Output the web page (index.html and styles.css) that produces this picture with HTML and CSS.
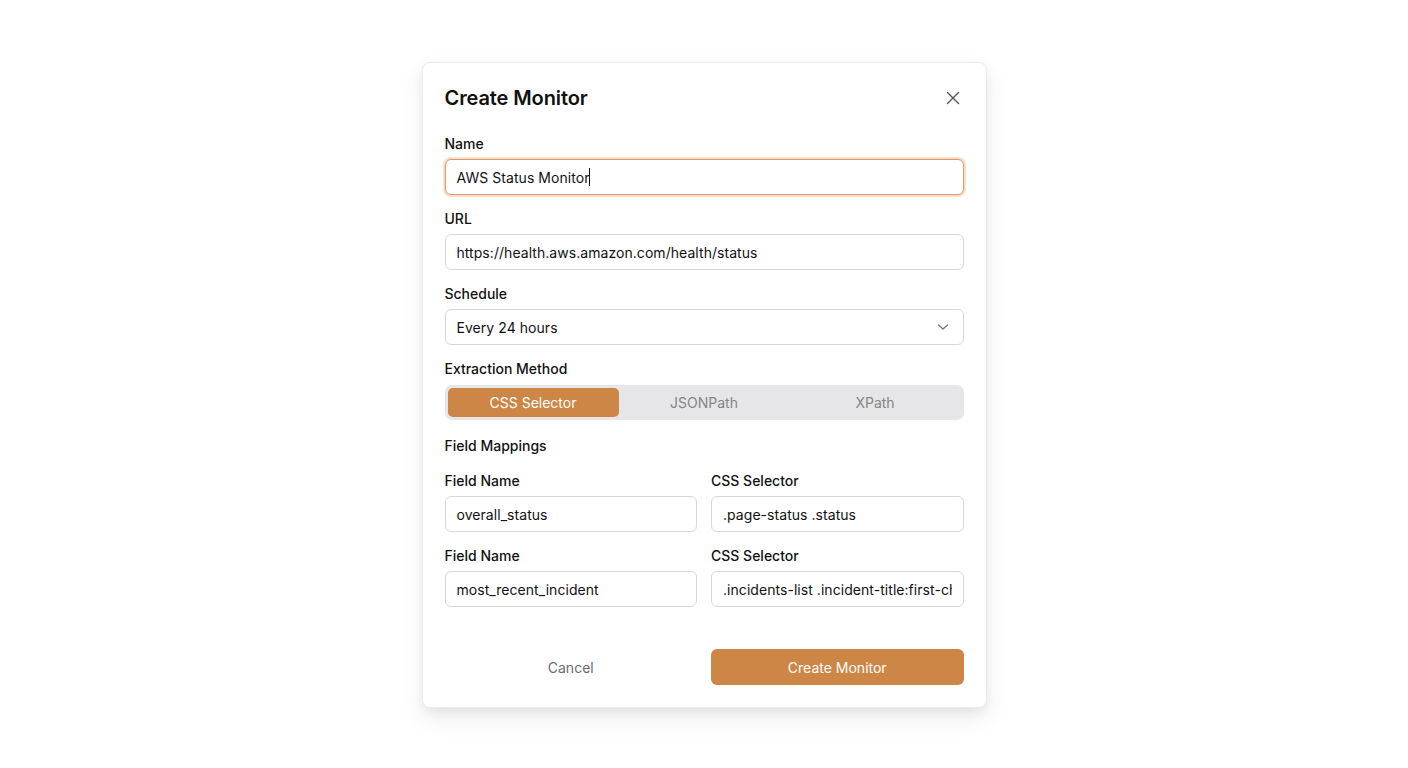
FILE: index.html
```html
<!DOCTYPE html>
<html lang="en">
<head>
<meta charset="utf-8">
<title>Create Monitor</title>
<link rel="stylesheet" href="styles.css">
</head>
<body>
<div class="page">
  <div class="modal">
    <div class="modal-header">
      <h2 class="title">Create Monitor</h2>
      <button class="close" aria-label="Close">
        <svg width="14" height="14" viewBox="0 0 14 14" fill="none" stroke="#555" stroke-width="1.4" stroke-linecap="round"><path d="M1.5 1.5l11 11M12.5 1.5l-11 11"/></svg>
      </button>
    </div>
    <div class="field">
      <label class="label">Name</label>
      <div class="input focused">AWS Status Monitor<span class="caret"></span></div>
    </div>
    <div class="field">
      <label class="label">URL</label>
      <div class="input">https://health.aws.amazon.com/health/status</div>
    </div>
    <div class="field">
      <label class="label">Schedule</label>
      <div class="input select">
        <span>Every 24 hours</span>
        <svg width="12" height="8" viewBox="0 0 12 8" fill="none" stroke="#777" stroke-width="1.3" stroke-linecap="round" stroke-linejoin="round"><path d="M1.5 2l4.5 4 4.5-4"/></svg>
      </div>
    </div>
    <div class="field seg-field">
      <label class="label">Extraction Method</label>
      <div class="segmented">
        <div class="seg active">CSS Selector</div>
        <div class="seg">JSONPath</div>
        <div class="seg">XPath</div>
      </div>
    </div>
    <div class="section-label">Field Mappings</div>
    <div class="mapping">
      <div class="field-c">
        <label class="label">Field Name</label>
        <div class="input">overall_status</div>
      </div>
      <div class="field-c">
        <label class="label">CSS Selector</label>
        <div class="input">.page-status .status</div>
      </div>
    </div>
    <div class="mapping">
      <div class="field-c">
        <label class="label">Field Name</label>
        <div class="input">most_recent_incident</div>
      </div>
      <div class="field-c">
        <label class="label">CSS Selector</label>
        <div class="input"><span class="clip">.incidents-list .incident-title:first-child</span></div>
      </div>
    </div>
    <div class="actions">
      <button class="btn cancel">Cancel</button>
      <button class="btn primary">Create Monitor</button>
    </div>
  </div>
</div>
</body>
</html>
```
FILE: styles.css
```css
* { box-sizing: border-box; }
html, body { margin: 0; padding: 0; background: #ffffff; }
body {
  font-family: Inter, "Noto Sans", "Liberation Sans", sans-serif;
  color: #111111;
  width: 1408px;
  height: 768px;
  overflow: hidden;
}
.page {
  display: flex;
  justify-content: center;
  padding-top: 62px;
}
.modal {
  width: 565px;
  background: #fff;
  border: 1px solid #ebebeb;
  border-radius: 8px;
  box-shadow: 0 10px 25px rgba(0,0,0,0.08), 0 4px 10px rgba(0,0,0,0.05);
  padding: 21px 22px 22px 22px;
}
.modal-header {
  display: flex;
  justify-content: space-between;
  align-items: center;
  height: 28px;
  margin-bottom: 22px;
}
.title {
  margin: 0;
  font-size: 20px;
  font-weight: 600;
  letter-spacing: -0.1px;
  line-height: 28px;
}
.close {
  border: 0;
  background: none;
  padding: 0;
  width: 14px;
  height: 14px;
  margin-right: 4px;
  display: flex;
}
.field { margin-bottom: 14px; }
.seg-field { margin-bottom: 16px; }
.seg-field .label { margin-bottom: 6px; }
.label {
  display: block;
  font-size: 14px;
  font-weight: 500;
  line-height: 20px;
  margin-bottom: 5px;
  color: #111;
}
.input {
  height: 36px;
  border: 1px solid #d8d8d8;
  border-radius: 6px;
  padding: 0 11px;
  display: flex;
  align-items: center;
  font-size: 14px;
  letter-spacing: 0.05px;
  color: #111;
  background: #fff;
  white-space: nowrap;
  overflow: hidden;
  min-width: 0;
}
.input.focused {
  border: 1px solid #d99a63;
  box-shadow: 0 0 0 2px #f6e0cc;
}
.caret {
  display: inline-block;
  width: 1px;
  height: 18px;
  background: #111;
}
.select { justify-content: space-between; padding-right: 14px; }
.clip {
  display: block;
  overflow: hidden;
  white-space: nowrap;
  min-width: 0;
  flex: 1;
}
.segmented {
  height: 35px;
  background: #e6e6e8;
  border-radius: 7px;
  padding: 3px;
  display: flex;
}
.seg {
  flex: 1;
  display: flex;
  align-items: center;
  justify-content: center;
  font-size: 14px;
  color: #858585;
  border-radius: 5px;
}
.seg.active {
  background: #cd8646;
  color: #fff;
}
.section-label {
  font-size: 14px;
  font-weight: 500;
  line-height: 20px;
  margin-bottom: 15px;
}
.mapping {
  display: grid;
  grid-template-columns: minmax(0, 1fr) minmax(0, 1fr);
  column-gap: 14px;
  margin-bottom: 14px;
}
.field-c { min-width: 0; }
.actions {
  display: grid;
  grid-template-columns: minmax(0, 1fr) minmax(0, 1fr);
  column-gap: 14px;
  margin-top: 42px;
}
.btn {
  height: 36px;
  border: 0;
  border-radius: 6px;
  font-family: inherit;
  font-size: 14px;
  cursor: pointer;
}
.cancel { background: transparent; color: #6b6b70; }
.primary { background: #cd8646; color: #fff; }
```
